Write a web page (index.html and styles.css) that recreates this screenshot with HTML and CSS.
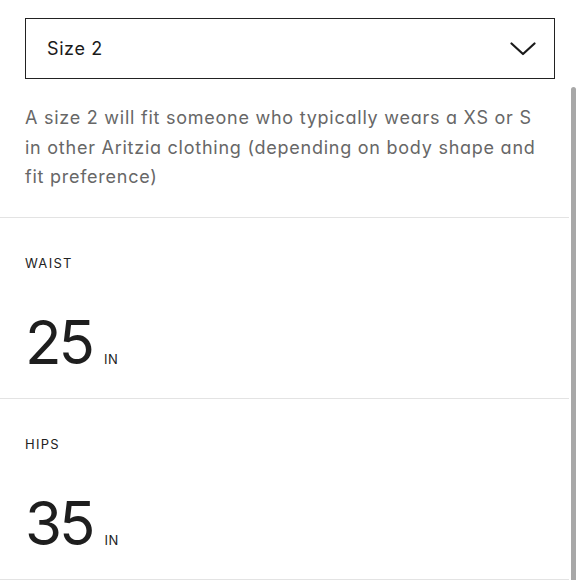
FILE: index.html
```html
<!DOCTYPE html>
<html>
<head>
<meta charset="utf-8">
<link rel="stylesheet" href="styles.css">
</head>
<body>
<div class="page">
  <div class="select">
    <span class="select-label">Size 2</span>
    <svg class="chevron" width="26" height="14" viewBox="0 0 26 14"><path d="M1.5 1.5 L13 12 L24.5 1.5" fill="none" stroke="#1a1a1a" stroke-width="2.2" stroke-linecap="round" stroke-linejoin="round"/></svg>
  </div>
  <div class="panel">
    <p class="desc">A size 2 will fit someone who typically wears a XS or S in other Aritzia clothing (depending on body shape and fit preference)</p>
    <div class="measure">
      <div class="m-label">WAIST</div>
      <div class="m-value"><span class="num">25</span><span class="unit">IN</span></div>
    </div>
    <div class="measure">
      <div class="m-label">HIPS</div>
      <div class="m-value"><span class="num">35</span><span class="unit">IN</span></div>
    </div>
    <div class="scrollbar"></div>
  </div>
</div>
</body>
</html>
```
FILE: styles.css
```css
* { box-sizing: border-box; }
html, body { margin: 0; padding: 0; background: #fff; }
body {
  font-family: Inter, "Liberation Sans", sans-serif;
  font-feature-settings: "cv11" 1;
  color: #222;
  width: 580px;
  height: 580px;
  overflow: hidden;
}
.page { padding-top: 18px; }
.select {
  margin: 0 25px;
  height: 61px;
  border: 1.5px solid #222;
  display: flex;
  align-items: center;
  justify-content: space-between;
  padding: 0 18px 0 21px;
}
.select-label { font-size: 18px; letter-spacing: 0.6px; color: #1a1a1a; }
.chevron { display: block; }
.panel { position: relative; padding-right: 11px; }
.desc {
  margin: 0;
  padding: 24px 16px 25px 25px;
  font-size: 18px;
  line-height: 29.5px;
  letter-spacing: 0.75px;
  color: #676767;
  border-bottom: 1px solid #e3e3e3;
}
.measure {
  border-bottom: 1px solid #e3e3e3;
  padding: 37px 25px 0 25px;
  height: 181px;
}
.m-label { font-size: 13px; line-height: 16px; letter-spacing: 1.3px; color: #222; }
.m-value {
  display: flex;
  align-items: baseline;
  margin-top: 36px;
}
.num { font-size: 60px; line-height: 70px; letter-spacing: -3px; color: #1e1e1e; }
.unit { font-size: 13px; margin-left: 12px; letter-spacing: 0.5px; }
.scrollbar {
  position: absolute;
  right: 4px;
  top: 8px;
  width: 5px;
  height: 520px;
  background: #a8a8a8;
  border-radius: 3px 3px 0 0;
}
```
